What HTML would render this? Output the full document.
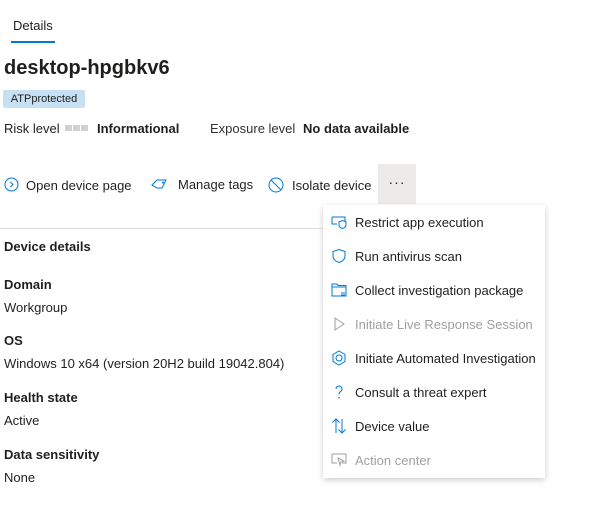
<!DOCTYPE html>
<html><head><style>
body{margin:0;width:613px;height:524px;background:#fff;font-family:"Liberation Sans",sans-serif;color:#201f1e;font-size:13px;position:relative;overflow:hidden}
.a{position:absolute;white-space:nowrap}
.b{font-weight:bold}
.mi{position:absolute;left:331px;height:20px;display:flex;align-items:center;font-size:13px}
.mi svg{width:16px;height:16px;margin-right:8px}
.dis{color:#a19f9d}
</style></head><body>
<div class="a" style="left:13px;top:18px">Details</div>
<div class="a" style="left:11px;top:41px;width:44px;height:2px;background:#0078d4"></div>
<div class="a b" style="left:4px;top:57px;font-size:20px">desktop-hpgbkv6</div>
<div class="a" style="left:3px;top:90px;width:82px;height:18px;background:#c7e0f4;border-radius:2px;font-size:11px;line-height:18px;text-align:center">ATPprotected</div>
<div class="a" style="left:4px;top:121px">Risk level</div>
<div class="a" style="left:65px;top:125px;width:24px;height:6px;background:repeating-linear-gradient(90deg,#d2d0ce 0 7px,#fff 7px 8px)"></div>
<div class="a b" style="left:97px;top:121px">Informational</div>
<div class="a" style="left:210px;top:121px;color:#323130">Exposure level</div>
<div class="a b" style="left:303px;top:121px">No data available</div>

<svg class="a" style="left:4px;top:177px" width="15" height="15" viewBox="0 0 15 15"><circle cx="7.5" cy="7.5" r="6.5" fill="none" stroke="#0078d4"/><path d="M6.3 4.8l2.7 2.7-2.7 2.7" fill="none" stroke="#0078d4"/></svg>
<div class="a" style="left:26px;top:178px">Open device page</div>
<svg class="a" style="left:151px;top:177px" width="17" height="15" viewBox="0 0 17 15"><path d="M1 8l5-5h9l-4 8H6z" fill="none" stroke="#0078d4"/><circle cx="12" cy="5.5" r="1" fill="#0078d4"/></svg>
<div class="a" style="left:178px;top:177px">Manage tags</div>
<svg class="a" style="left:268px;top:177px" width="16" height="16" viewBox="0 0 16 16"><circle cx="8" cy="8" r="7" fill="none" stroke="#0078d4"/><path d="M3 3l10 10" stroke="#0078d4"/></svg>
<div class="a" style="left:292px;top:178px">Isolate device</div>
<div class="a" style="left:378px;top:164px;width:38px;height:40px;background:#edebe9;text-align:center;line-height:36px;font-size:14px;letter-spacing:1px">···</div>

<div class="a" style="left:0;top:228px;width:323px;height:1px;background:#e1dfdd"></div>
<div class="a b" style="left:4px;top:239px">Device details</div>
<div class="a b" style="left:4px;top:277px">Domain</div>
<div class="a" style="left:4px;top:300px">Workgroup</div>
<div class="a b" style="left:4px;top:333px">OS</div>
<div class="a" style="left:4px;top:356px">Windows 10 x64 (version 20H2 build 19042.804)</div>
<div class="a b" style="left:4px;top:390px">Health state</div>
<div class="a" style="left:4px;top:413px">Active</div>
<div class="a b" style="left:4px;top:447px">Data sensitivity</div>
<div class="a" style="left:4px;top:470px">None</div>

<div class="a" style="left:323px;top:205px;width:222px;height:273px;background:#fff;box-shadow:0 2px 6px rgba(0,0,0,.2)"></div>
<div class="mi" style="top:212px"><svg viewBox="0 0 16 16"><path d="M1 3h13v5M1 3v7h5" fill="none" stroke="#0078d4"/><path d="M8 8l3.5-1.5L15 8v3c0 2-2 3-3.5 3.5C10 14 8 13 8 11z" fill="none" stroke="#0078d4"/></svg>Restrict app execution</div>
<div class="mi" style="top:246px"><svg viewBox="0 0 16 16"><path d="M8 1.5l6 2v4.5c0 3.5-3 5.5-6 6.5-3-1-6-3-6-6.5V3.5z" fill="none" stroke="#0078d4"/></svg>Run antivirus scan</div>
<div class="mi" style="top:280px"><svg viewBox="0 0 16 16"><path d="M1 2h5l1 1.5h8V14H1z M1 5h14" fill="none" stroke="#0078d4"/><path d="M10 11h4M10 13h4" stroke="#0078d4"/></svg>Collect investigation package</div>
<div class="mi dis" style="top:314px"><svg viewBox="0 0 16 16"><path d="M4 2l9 6-9 6z" fill="none" stroke="#a19f9d"/></svg>Initiate Live Response Session</div>
<div class="mi" style="top:348px"><svg viewBox="0 0 16 16"><path d="M8 1l6 3.5v7L8 15l-6-3.5v-7z" fill="none" stroke="#0078d4"/><circle cx="8" cy="8" r="3" fill="none" stroke="#0078d4"/></svg>Initiate Automated Investigation</div>
<div class="mi" style="top:382px"><svg viewBox="0 0 16 16"><path d="M5 5a3 3 0 1 1 4.5 2.6C8.5 8.3 8 9 8 10.5" fill="none" stroke="#0078d4"/><circle cx="8" cy="13.5" r=".8" fill="#0078d4"/></svg>Consult a threat expert</div>
<div class="mi" style="top:416px"><svg viewBox="0 0 16 16"><path d="M5 15V1M1.5 4.5L5 1l3.5 3.5M11 1v14M7.5 11.5L11 15l3.5-3.5" fill="none" stroke="#0078d4"/></svg>Device value</div>
<div class="mi dis" style="top:450px"><svg viewBox="0 0 16 16"><path d="M1 2h14v9h-4M1 2v9h5" fill="none" stroke="#a19f9d"/><path d="M7 6l6 3-3 1-1 3z" fill="none" stroke="#a19f9d"/></svg>Action center</div>
</body></html>
